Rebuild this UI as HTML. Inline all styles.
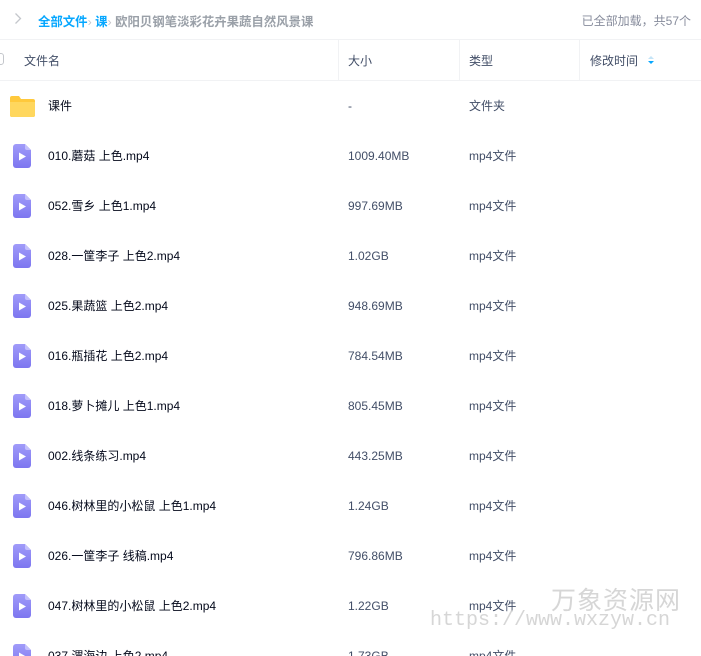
<!DOCTYPE html>
<html><head><meta charset="utf-8"><style>
*{margin:0;padding:0;box-sizing:border-box}
html,body{width:701px;height:656px;overflow:hidden}
body{background:#fff;font-family:"Liberation Sans","Noto Sans CJK SC",sans-serif;font-size:12px;color:#424e67;position:relative}
.abs{position:absolute;white-space:nowrap}
.hdr{position:absolute;left:0;top:39px;width:701px;height:42px;border-top:1px solid #f1f2f4;border-bottom:1px solid #f1f2f4}
.div{position:absolute;top:39px;height:42px;width:1px;background:#f1f2f4}
.row{position:absolute;left:0;width:701px;height:50px}
.row .n{position:absolute;left:48px;top:0;line-height:50px;color:#03081a;font-size:12px}
.row .s{position:absolute;left:348px;line-height:50px;color:#424e67}
.row .t{position:absolute;left:469px;line-height:50px;color:#424e67}
.ic{position:absolute;left:13px;top:13px}
</style></head><body>
<svg class="abs" style="left:14px;top:12px" width="8" height="13" viewBox="0 0 8 13"><path d="M1.5 1.5l5 5-5 5" fill="none" stroke="#c4c7cc" stroke-width="1.3"/></svg>
<div class="abs" style="left:38px;top:12px;font-size:12.4px;"><b style="color:#06a7ff">全部文件</b><span style="color:#c4c7cc">›</span> <b style="color:#06a7ff">课</b><span style="color:#c4c7cc">›</span> <b style="color:#9aa0a8;font-weight:bold">欧阳贝钢笔淡彩花卉果蔬自然风景课</b></div>
<div class="abs" style="right:10px;top:12px;color:#878c9c">已全部加载，共57个</div>
<div class="hdr"></div>
<div class="div" style="left:338px"></div><div class="div" style="left:459px"></div><div class="div" style="left:579px"></div>
<div class="abs" style="left:-8px;top:53px;width:12px;height:12px;border:1px solid #c4c7cc;border-radius:3px"></div>
<div class="abs" style="left:24px;top:52px;">文件名</div>
<div class="abs" style="left:348px;top:52px;">大小</div>
<div class="abs" style="left:469px;top:52px;">类型</div>
<div class="abs" style="left:590px;top:52px;">修改时间</div>
<div class="abs" style="left:648px;top:56px;width:0;height:0;border-left:3px solid transparent;border-right:3px solid transparent;border-bottom:3px solid #c4e4f7"></div>
<div class="abs" style="left:648px;top:61px;width:0;height:0;border-left:3px solid transparent;border-right:3px solid transparent;border-top:3px solid #06a7ff"></div>

<div class="row" style="top:81px"><svg class="ic" style="left:10px;top:14px" width="25" height="22" viewBox="0 0 25 22"><path d="M2 1h7l2 3h12a2 2 0 0 1 2 2v14a2 2 0 0 1-2 2H2a2 2 0 0 1-2-2V3a2 2 0 0 1 2-2z" fill="#ffc93c"/><path d="M0 7h25v13a2 2 0 0 1-2 2H2a2 2 0 0 1-2-2z" fill="#ffd75e"/></svg><span class="n">课件</span><span class="s">-</span><span class="t">文件夹</span></div>

<div id="rows"></div>
<script>
var d=[["010.蘑菇 上色.mp4","1009.40MB"],["052.雪乡 上色1.mp4","997.69MB"],["028.一筐李子 上色2.mp4","1.02GB"],["025.果蔬篮 上色2.mp4","948.69MB"],["016.瓶插花 上色2.mp4","784.54MB"],["018.萝卜摊儿 上色1.mp4","805.45MB"],["002.线条练习.mp4","443.25MB"],["046.树林里的小松鼠 上色1.mp4","1.24GB"],["026.一筐李子 线稿.mp4","796.86MB"],["047.树林里的小松鼠 上色2.mp4","1.22GB"],["037.渭海边 上色2.mp4","1.73GB"]];
var h="";d.forEach(function(r,i){h+='<div class="row" style="top:'+(131+i*50)+'px"><svg class="ic" width="18" height="24" viewBox="0 0 18 24"><defs><linearGradient id="g'+i+'" x1="0" y1="0" x2="0" y2="1"><stop offset="0" stop-color="#a09bf9"/><stop offset="1" stop-color="#7d76f0"/></linearGradient></defs><path d="M3 0h9l6 6v15a3 3 0 0 1-3 3H3a3 3 0 0 1-3-3V3a3 3 0 0 1 3-3z" fill="url(#g'+i+')"/><path d="M12 0v4a2 2 0 0 0 2 2h4z" fill="#c3bffc"/><path d="M6 8.5l7 4-7 4z" fill="#fff"/></svg><span class="n">'+r[0]+'</span><span class="s">'+r[1]+'</span><span class="t">mp4文件</span></div>';});
document.getElementById("rows").innerHTML=h;
</script>
<div class="abs" style="left:551px;top:581px;font-size:25px;color:rgba(200,200,200,0.75);letter-spacing:1px">万象资源网</div>
<div class="abs" style="left:430px;top:609px;font-size:20px;font-family:'Liberation Mono',monospace;color:rgba(200,200,200,0.75);letter-spacing:0">https://www.wxzyw.cn</div>
</body></html>
